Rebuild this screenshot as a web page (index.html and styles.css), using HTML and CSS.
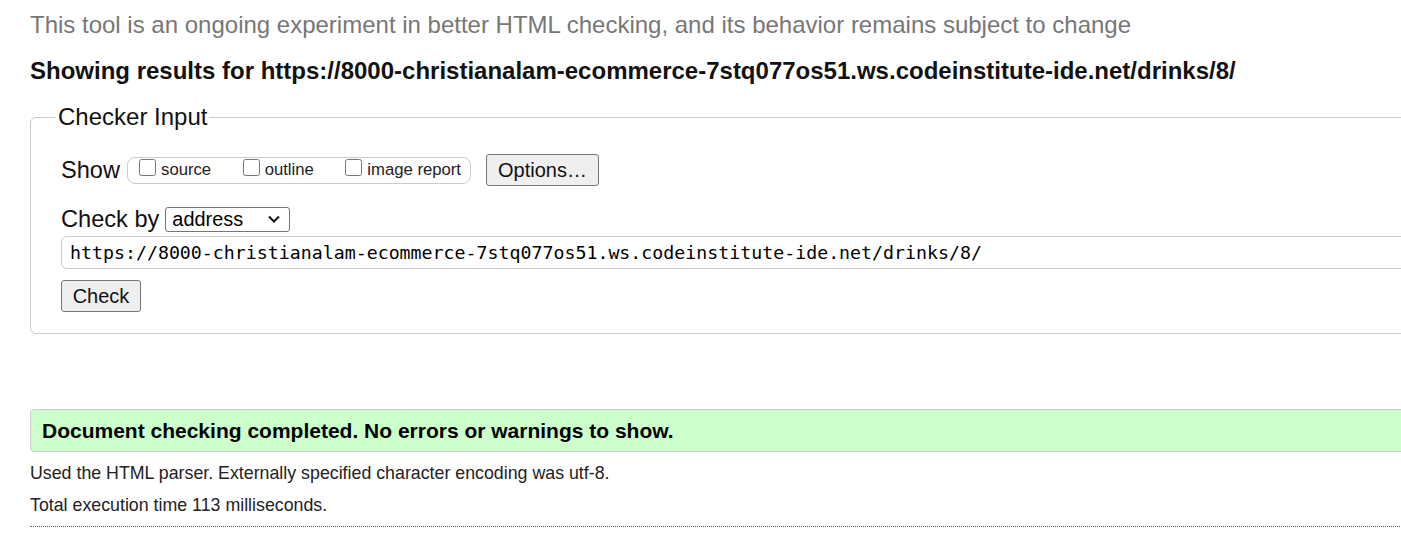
FILE: index.html
```html
<!DOCTYPE html>
<html>
<head>
<meta charset="utf-8">
<title>Nu Html Checker</title>
<link rel="stylesheet" href="styles.css">
</head>
<body>
<div class="page">
  <p class="intro">This tool is an ongoing experiment in better HTML checking, and its behavior remains subject to change</p>
  <p class="showing">Showing results for https://8000-christianalam-ecommerce-7stq077os51.ws.codeinstitute-ide.net/drinks/8/</p>
  <form class="checker">
    <fieldset class="fs">
      <legend class="legend">Checker Input</legend>
      <div class="row show-row">
        <span class="row-label">Show</span>
        <span class="opts">
          <label class="opt"><input type="checkbox" class="cb"><span>source</span></label>
          <label class="opt"><input type="checkbox" class="cb"><span>outline</span></label>
          <label class="opt"><input type="checkbox" class="cb"><span>image report</span></label>
        </span>
        <button type="button" class="btn btn-options">Options…</button>
      </div>
      <div class="row by-row">
        <span class="row-label">Check by</span>
        <span class="select">address<svg class="chev" width="14" height="10" viewBox="0 0 14 10"><path d="M2 2.5 L7 7.5 L12 2.5" fill="none" stroke="#111" stroke-width="2"/></svg></span>
      </div>
      <div class="url">https://8000-christianalam-ecommerce-7stq077os51.ws.codeinstitute-ide.net/drinks/8/</div>
      <div class="row">
        <button type="button" class="btn btn-check">Check</button>
      </div>
    </fieldset>
  </form>
  <div class="success">Document checking completed. No errors or warnings to show.</div>
  <p class="details">Used the HTML parser. Externally specified character encoding was utf-8.</p>
  <p class="details">Total execution time 113 milliseconds.</p>
  <hr class="sep">
</div>
</body>
</html>
```
FILE: styles.css
```css
html, body {
  margin: 0;
  padding: 0;
  overflow: hidden;
  background: #fff;
}
body {
  font-family: "Liberation Sans", Arial, sans-serif;
  color: #1a1a1a;
}
.page {
  width: 1500px;
  padding-left: 30px;
  padding-top: 11px;
}
.intro {
  margin: 0;
  font-size: 24px;
  line-height: 27px;
  color: #777;
}
.showing {
  margin: 20px 0 0 0;
  font-size: 24px;
  line-height: 26px;
  font-weight: bold;
  color: #111;
}
.checker {
  margin: 0;
}
.fs {
  margin: 19px 0 0 0;
  border: 1px solid #ccc;
  border-radius: 6px;
  padding: 4px 0 21px 30px;
}
.legend {
  font-size: 24px;
  line-height: 28px;
  padding: 0 2px;
  margin-left: -5px;
  color: #111;
}
.row {
  display: flex;
  align-items: center;
}
.row-label {
  font-size: 23.6px;
  color: #111;
}
.show-row {
  height: 32px;
  margin-top: 19px;
}
.opts {
  display: flex;
  align-items: center;
  margin-left: 7px;
  height: 25px;
  border: 1px solid #ccc;
  border-radius: 8px;
  padding: 0 9px 0 11px;
  gap: 31.5px;
  font-size: 16.7px;
  color: #222;
}
.opt {
  display: flex;
  align-items: center;
}
.cb {
  width: 17px;
  height: 17px;
  margin: 0 5px 5px 0;
  accent-color: #555;
}
.btn {
  font-family: "Liberation Sans", Arial, sans-serif;
  font-size: 20px;
  color: #111;
  background: #efefef;
  border: 1px solid #767676;
  border-radius: 3px;
  padding: 0;
}
.btn-options {
  margin-left: 15px;
  width: 113px;
  height: 32px;
}
.by-row {
  margin-top: 20px;
  height: 26px;
}
.select {
  margin-left: 6px;
  width: 125px;
  height: 25px;
  box-sizing: border-box;
  border: 1px solid #767676;
  border-radius: 3px;
  font-size: 19.9px;
  line-height: 23px;
  padding-left: 6px;
  padding-right: 8px;
  display: flex;
  align-items: center;
  justify-content: space-between;
  color: #000;
}
.url {
  margin-top: 4px;
  height: 33px;
  box-sizing: border-box;
  border: 1px solid #ccc;
  border-radius: 6px;
  padding-left: 8px;
  font-family: "DejaVu Sans Mono", "Liberation Mono", monospace;
  font-size: 18.26px;
  line-height: 31px;
  color: #000;
  white-space: nowrap;
}
.btn-check {
  margin-top: 11px;
  width: 80px;
  height: 32px;
}
.success {
  margin-top: 75px;
  height: 43px;
  box-sizing: border-box;
  background: #ccffcc;
  border: 1px solid #ccc;
  border-radius: 4px;
  padding-left: 11px;
  font-size: 21px;
  font-weight: bold;
  line-height: 41px;
  color: #000;
}
.details {
  margin: 8px 0 0 0;
  font-size: 17.8px;
  line-height: 26px;
  color: #222;
}
.details + .details {
  margin-top: 6px;
}
.sep {
  margin: 8px 0 0 0;
  border: 0;
  border-top: 1px dotted #666;
  height: 0;
}
```
